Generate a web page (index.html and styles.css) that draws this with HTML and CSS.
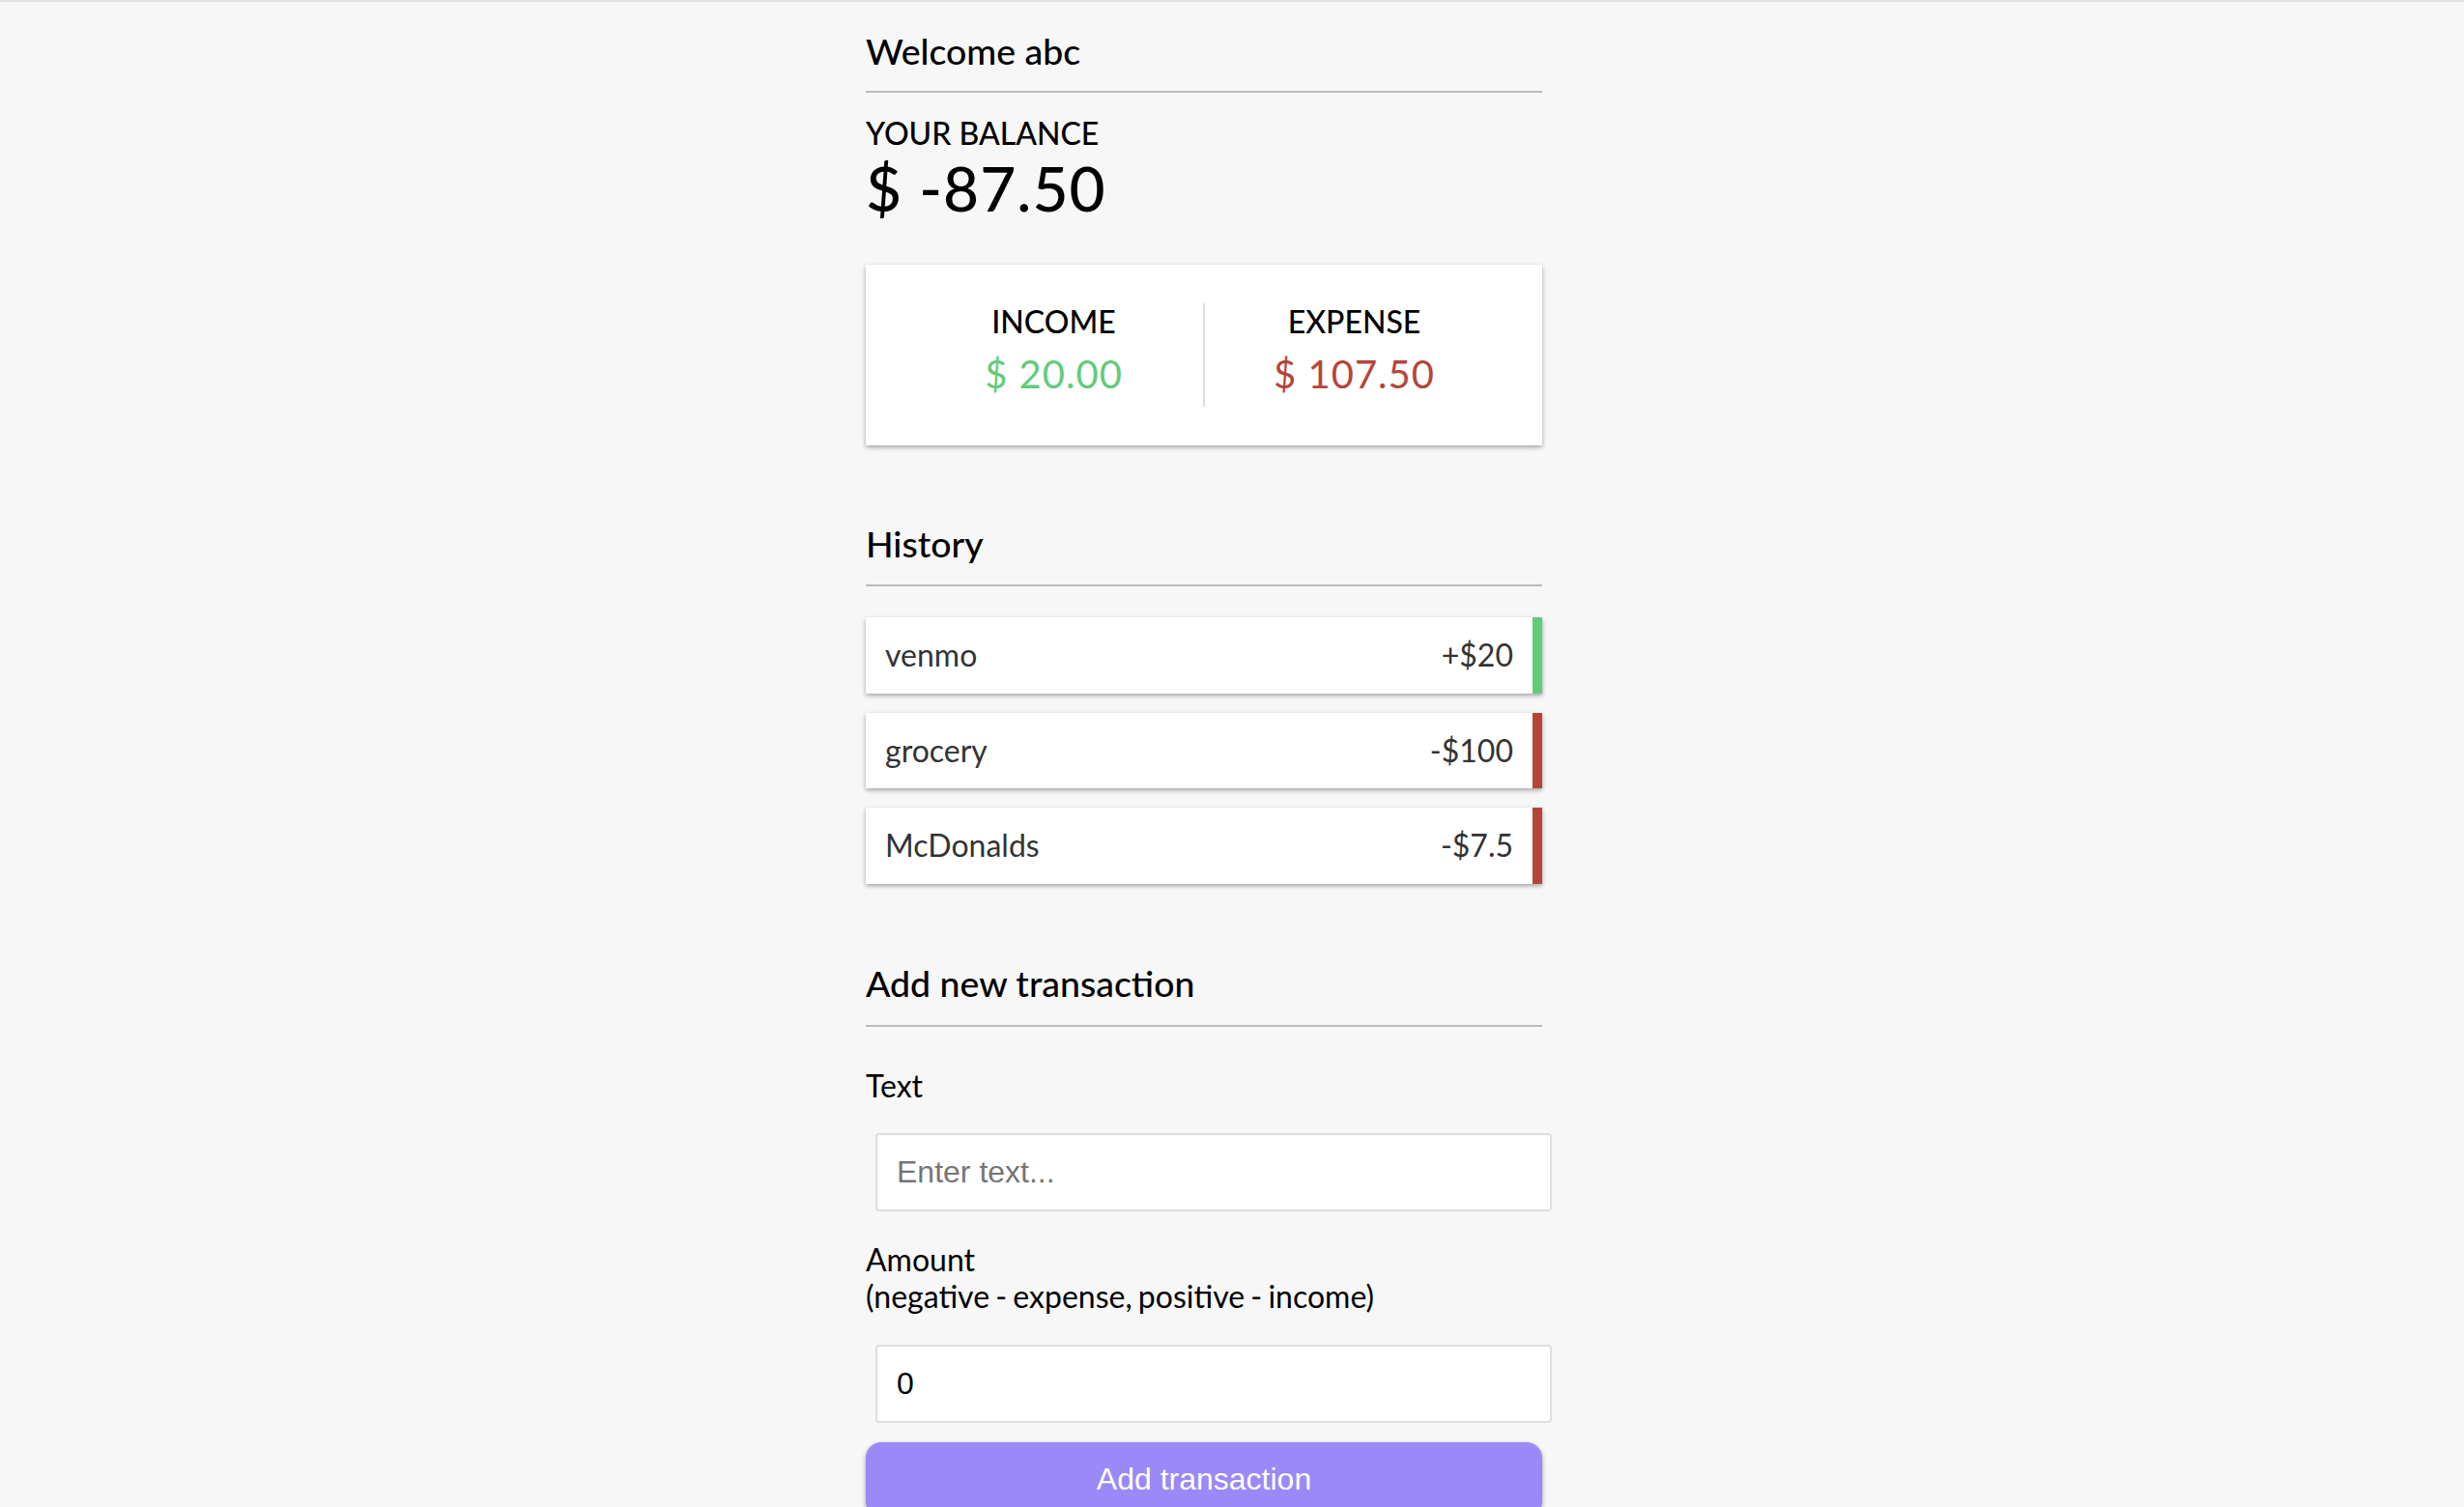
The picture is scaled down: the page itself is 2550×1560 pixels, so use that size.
FILE: index.html
```html
<!DOCTYPE html>
<html lang="en">
<head>
<meta charset="utf-8">
<title>Expense Tracker</title>
<link rel="stylesheet" href="styles.css">
</head>
<body>
<div class="topbar"></div>
<div class="page">
  <div class="container">
    <h3 class="welcome">Welcome abc</h3>
    <h4>Your Balance</h4>
    <h1 class="balance">$ -87.50</h1>

    <div class="inc-exp-container">
      <div class="inc-col">
        <h4>Income</h4>
        <p class="money plus">$ 20.00</p>
      </div>
      <div class="inc-col">
        <h4>Expense</h4>
        <p class="money minus">$ 107.50</p>
      </div>
    </div>

    <h3>History</h3>
    <ul class="list">
      <li class="plus">venmo <span>+$20</span></li>
      <li class="minus">grocery <span>-$100</span></li>
      <li class="minus">McDonalds <span>-$7.5</span></li>
    </ul>

    <h3 class="form-title">Add new transaction</h3>
    <form class="form">
      <div class="form-control">
        <label for="text">Text</label>
        <input type="text" id="text" placeholder="Enter text...">
      </div>
      <div class="form-control">
        <label for="amount">Amount <br>(negative - expense, positive - income)</label>
        <input type="number" id="amount" value="0">
      </div>
      <button class="btn" type="button">Add transaction</button>
    </form>
  </div>
</div>
</body>
</html>
```

FILE: styles.css
```css
* {
  box-sizing: border-box;
}

html {
  overflow: hidden;
}

body {
  margin: 0;
  background-color: #f7f7f7;
  font-family: Lato, "Noto Sans", sans-serif;
  font-size: 32px;
  color: #000;
}

.topbar {
  height: 2px;
  background-color: #e3e3e3;
}

.page {
  padding-right: 58px;
}

.container {
  width: 700px;
  margin: 0 auto;
  padding-top: 29px;
}

h1 {
  font-size: 64px;
  font-weight: 500;
  letter-spacing: 1px;
  line-height: 1.2;
  margin: 0;
}

h3 {
  font-size: 37.44px;
  font-weight: 500;
  line-height: 1.2;
  border-bottom: 2px solid #bbb;
  padding-bottom: 20px;
  margin: 80px 0 20px;
}

h3.welcome {
  margin-top: 0;
  margin-bottom: 23px;
  padding-bottom: 18px;
}

h3.form-title {
  margin-top: 81px;
}

h4 {
  font-size: 32px;
  font-weight: 500;
  line-height: 1.2;
  margin: 0;
  text-transform: uppercase;
}

.inc-exp-container {
  background-color: #fff;
  box-shadow: 0 2px 6px rgba(0, 0, 0, 0.12), 0 2px 4px rgba(0, 0, 0, 0.24);
  padding: 40px;
  display: flex;
  justify-content: space-between;
  margin: 40px 0;
}

.inc-col {
  flex: 1;
  text-align: center;
}

.inc-col:first-of-type {
  border-right: 2px solid #dedede;
}

.money {
  font-size: 40px;
  line-height: 1.2;
  letter-spacing: 1px;
  margin: 10px 0;
}

.money.plus {
  color: #62cb7a;
}

.money.minus {
  color: #b44538;
}

.list {
  list-style-type: none;
  padding: 0;
  margin: 32px 0 80px;
}

.list li {
  background-color: #fff;
  box-shadow: 0 2px 6px rgba(0, 0, 0, 0.12), 0 2px 4px rgba(0, 0, 0, 0.24);
  color: #333;
  display: flex;
  justify-content: space-between;
  line-height: 1.2;
  padding: 20px;
  margin: 20px 0;
}

.list li.plus {
  border-right: 10px solid #62cb7a;
}

.list li.minus {
  border-right: 10px solid #b44538;
}

.form {
  padding-top: 1px;
}

label {
  display: inline-block;
  line-height: 1.2;
  margin: 21px 0 20px;
  word-spacing: -2px;
}

.form-control input {
  display: block;
  width: 100%;
  margin: 10px;
  border: 2px solid #dedede;
  border-radius: 4px;
  background-color: #fff;
  font-family: "Liberation Sans", Arial, sans-serif;
  font-size: 32px;
  color: #000;
  padding: 20px;
  outline: none;
}

.form-control input::placeholder {
  color: #757575;
}

.btn {
  display: block;
  width: 100%;
  margin: 20px 0 60px;
  padding: 20px;
  border: 0;
  border-radius: 16px;
  background-color: #9a89f6;
  box-shadow: 0 2px 6px rgba(0, 0, 0, 0.12), 0 2px 4px rgba(0, 0, 0, 0.24);
  color: #fff;
  font-family: "Liberation Sans", Arial, sans-serif;
  font-size: 32px;
  cursor: pointer;
}
```
